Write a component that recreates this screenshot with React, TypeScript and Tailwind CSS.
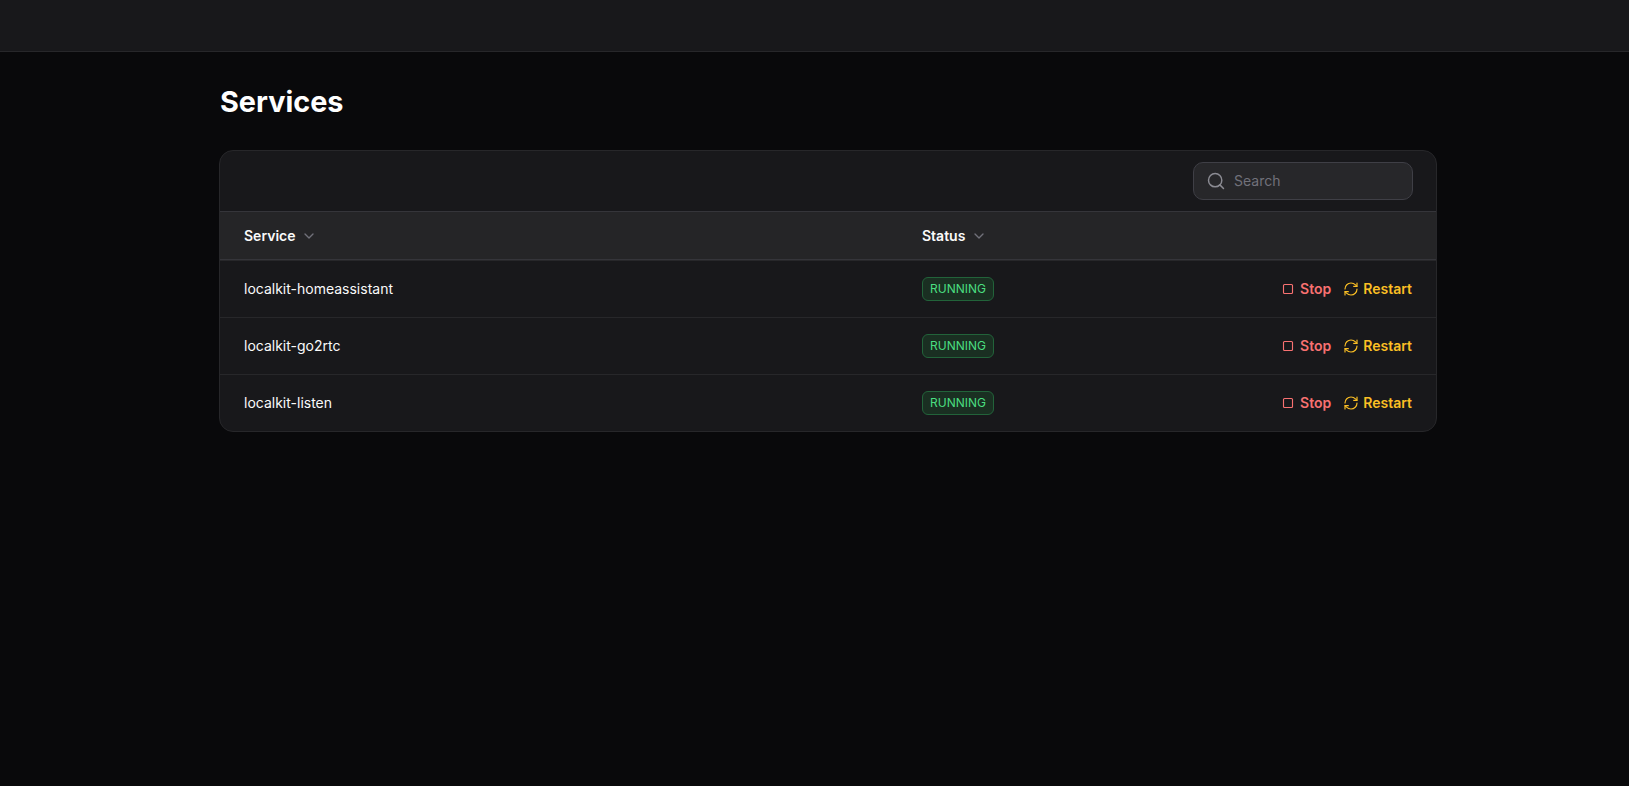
import { ChevronDown, RefreshCw, Search, Square } from "lucide-react";

const services = ["localkit-homeassistant", "localkit-go2rtc", "localkit-listen"];

function Row({ name }: { name: string }) {
  return (
    <div className="grid h-[57px] grid-cols-[678px_1fr_auto] items-center border-t border-[#27272a] pr-6 pl-6 first:border-t-0">
      <span className="text-sm text-[#fafafa]">{name}</span>
      <div className="flex">
        <span className="flex h-6 items-center rounded-md border border-[#22633a] bg-[#1a2f22] px-[7px] text-xs text-[#4ade80]">
          RUNNING
        </span>
      </div>
      <div className="flex items-center gap-3 text-sm font-semibold">
        <button className="flex items-center gap-1.5 text-[#f87171]">
          <Square size={12} strokeWidth={2.25} />
          Stop
        </button>
        <button className="flex items-center gap-1 text-[#fbbf24]">
          <RefreshCw size={16} strokeWidth={1.75} />
          Restart
        </button>
      </div>
    </div>
  );
}

export default function App() {
  return (
    <div className="min-h-[786px] bg-[#09090b] font-['Inter',sans-serif] text-white">
      <header className="h-[52px] border-b border-[#27272a] bg-[#18181b]" />
      <main className="ml-[219px] w-[1218px]">
        <h1 className="pt-8 pl-[1px] text-[28.8px] leading-9 font-bold">Services</h1>
        <section className="mt-[30px] overflow-hidden rounded-[14px] border border-[#27272a] bg-[#18181b]">
          <div className="flex h-[60px] items-center justify-end pr-[23px]">
            <div className="flex h-[38px] w-[220px] items-center gap-2 rounded-[10px] border border-[#3f3f46] bg-[#27272a] px-3">
              <Search size={20} strokeWidth={1.75} className="text-[#8b8b93]" />
              <span className="text-sm text-[#71717a]">Search</span>
            </div>
          </div>
          <div className="grid h-[49px] grid-cols-[678px_1fr] items-center border-y border-[#35353a] bg-[#252527] pl-6 text-sm font-semibold text-[#fafafa]">
            <div className="flex items-center gap-1.5">
              Service
              <ChevronDown size={16} className="text-[#71717a]" />
            </div>
            <div className="flex items-center gap-1.5">
              Status
              <ChevronDown size={16} className="text-[#71717a]" />
            </div>
          </div>
          {services.map((s) => (
            <Row key={s} name={s} />
          ))}
        </section>
      </main>
    </div>
  );
}
